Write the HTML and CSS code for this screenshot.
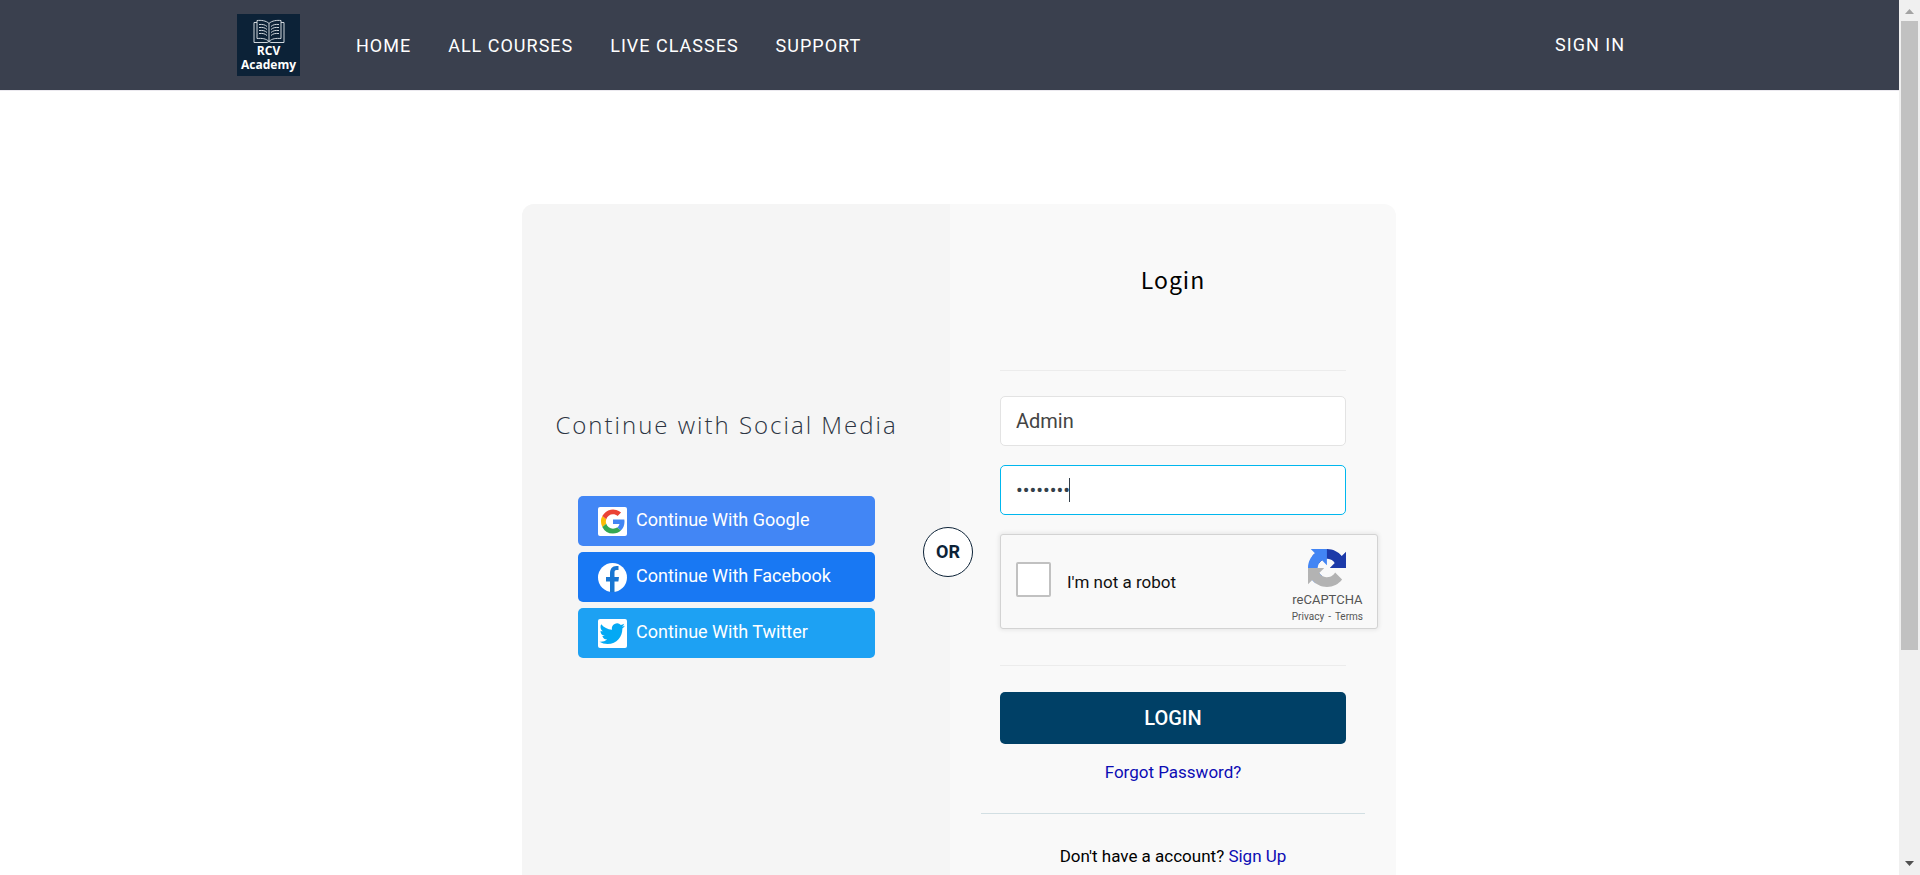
FILE: index.html
```html
<!DOCTYPE html>
<html lang="en">
<head>
<meta charset="utf-8">
<title>Login - RCV Academy</title>
<link rel="stylesheet" href="styles.css">
</head>
<body>
<div class="page">
  <header class="site-header">
    <div class="header-inner">
      <a class="logo" href="#" aria-label="RCV Academy home">
        <svg class="logo-book" viewBox="0 0 32 24" fill="none" stroke="#cfd6dc" stroke-width="1" aria-hidden="true">
          <path d="M16 4C13 1 8 .6 4 1v18c5-.4 9 0 12 3 3-3 7-3.400 12-3V1c-4-.4-9 0-12 3v18"/>
          <path d="M4 3H1v20h13l2-1 2 1h13V3h-3"/>
          <path d="M6 5c4-.3 6 .2 8 2M6 8c4-.3 6 .2 8 2M6 11c4-.3 6 .2 8 2M6 14c4-.3 6 .2 8 2M18 7c2-1.800 4-2.300 8-2M18 10c2-1.800 4-2.300 8-2M18 13c2-1.800 4-2.300 8-2M18 16c2-1.800 4-2.300 8-2"/>
        </svg>
        <span class="logo-text">RCV<br>Academy</span>
      </a>
      <nav class="main-nav" aria-label="Main">
        <a href="#">HOME</a>
        <a href="#">ALL COURSES</a>
        <a href="#">LIVE CLASSES</a>
        <a href="#">SUPPORT</a>
      </nav>
      <a class="sign-in" href="#">SIGN IN</a>
    </div>
  </header>

  <main class="main">
    <div class="card">
      <section class="social">
        <h2 class="social-title">Continue with Social Media</h2>
        <div class="social-list">
          <button class="social-btn google" type="button">
            <svg class="social-icon" viewBox="0 0 29 29" aria-hidden="true">
              <rect width="29" height="29" rx="2" fill="#fff"/>
              <g transform="translate(3 2.500) scale(.5)">
                <path fill="#4285f4" d="M47 24.500c0-1.600-.2-3.200-.4-4.500H24v9h13c-.6 3-2.300 5.500-4.800 7.200l7.500 5.900C44.300 37.900 47 31.800 47 24.500z"/>
                <path fill="#fbbc05" d="M10.500 28.600a14.500 14.500 0 0 1 0-9.200l-7.900-6.200a24 24 0 0 0 0 21.600z"/>
                <path fill="#ea4335" d="M24 9.500c3.500 0 6.700 1.200 9.200 3.600l6.900-6.900A24 24 0 0 0 2.600 13.200l7.900 6.200C12.400 13.700 17.700 9.500 24 9.500z"/>
                <path fill="#34a853" d="M24 48c6.500 0 11.900-2.100 15.900-5.800l-7.700-6c-2.200 1.500-4.900 2.300-8.200 2.300-6.300 0-11.600-4.200-13.500-9.900l-7.900 6.200A24 24 0 0 0 24 48z"/>
              </g>
            </svg>
            <span>Continue With Google</span>
          </button>
          <button class="social-btn facebook" type="button">
            <svg class="social-icon" viewBox="0 0 29 29" aria-hidden="true">
              <circle cx="14.500" cy="14.500" r="14.500" fill="#fff"/>
              <path fill="#1976d2" d="M12 29V18.500H8V14h4v-3.200C12 6 14 3 18.500 3H20.500v4h-2C16.800 7 16.500 8 16.500 9.700V14H21l-.6 4.500h-3.900V29z"/>
            </svg>
            <span>Continue With Facebook</span>
          </button>
          <button class="social-btn twitter" type="button">
            <svg class="social-icon" viewBox="0 0 29 29" aria-hidden="true">
              <rect width="29" height="29" rx="2" fill="#fff"/>
              <path transform="translate(1.500 2) scale(1.060)" fill="#03a9f4" d="M23.950 4.570a10 10 0 0 1-2.820.77 4.960 4.960 0 0 0 2.160-2.720c-.95.550-2 .96-3.130 1.180a4.920 4.920 0 0 0-8.380 4.480C7.690 8.090 4.070 6.130 1.640 3.160a4.820 4.820 0 0 0-.67 2.480c0 1.710.87 3.210 2.190 4.100a4.900 4.900 0 0 1-2.230-.62v.06a4.920 4.920 0 0 0 3.950 4.830 5 5 0 0 1-2.210.08 4.940 4.940 0 0 0 4.600 3.420A9.870 9.870 0 0 1 0 19.540a13.990 13.990 0 0 0 7.550 2.210c9.050 0 14-7.500 14-13.980 0-.21 0-.42-.02-.63a9.940 9.940 0 0 0 2.460-2.550z"/>
            </svg>
            <span>Continue With Twitter</span>
          </button>
        </div>
        <span class="or-badge">OR</span>
      </section>

      <section class="login">
        <form class="login-form">
          <h1 class="login-title">Login</h1>
          <div class="fields">
            <input class="field" type="text" aria-label="Username" value="Admin">
            <div class="password">
              <input class="field field-active" type="password" aria-label="Password" value="password">
              <span class="caret"></span>
            </div>
            <div class="captcha">
              <input class="captcha-box" type="checkbox" id="robot">
              <label class="captcha-label" for="robot">I'm not a robot</label>
              <div class="captcha-brand">
                <svg class="captcha-logo" viewBox="0 0 64 64" aria-hidden="true">
                  <path fill="#1c3aa9" d="M64 31.955l-.033-1.370V4.687l-7.160 7.160C50.948 4.674 42.033.093 32.050.093c-10.400 0-19.622 4.960-25.458 12.640l11.736 11.860a15.550 15.550 0 0 1 4.754-5.334c2.050-1.600 4.952-2.906 8.968-2.906.485 0 .860.057 1.135.163 4.976.393 9.288 3.140 11.828 7.124l-8.307 8.307L64 31.953"/>
                  <path fill="#4285f4" d="M31.862.094l-1.370.033H4.594l7.160 7.160C4.580 13.147 0 22.060 0 32.046c0 10.400 4.960 19.622 12.640 25.458L24.500 45.768a15.550 15.550 0 0 1-5.334-4.754c-1.600-2.050-2.906-4.952-2.906-8.968 0-.485.057-.860.163-1.135.393-4.976 3.140-9.288 7.124-11.828l8.307 8.307L31.860.095"/>
                  <path fill="#b3b3b3" d="M.001 32.045l.033 1.370v25.898l7.160-7.160c5.860 7.173 14.774 11.754 24.760 11.754 10.400 0 19.622-4.960 25.458-12.640l-11.736-11.860a15.550 15.550 0 0 1-4.754 5.334c-2.050 1.600-4.952 2.906-8.968 2.906-.485 0-.860-.057-1.135-.163-4.976-.393-9.288-3.140-11.828-7.124l8.307-8.307L0 32.045"/>
                </svg>
                <span class="captcha-name">reCAPTCHA</span>
                <span class="captcha-links"><a href="#">Privacy</a><span>-</span><a href="#">Terms</a></span>
              </div>
            </div>
          </div>
          <button class="login-btn" type="submit">LOGIN</button>
          <a class="link forgot" href="#">Forgot Password?</a>
        </form>
        <p class="signup">Don't have a account? <a class="link" href="#">Sign Up</a></p>
      </section>
    </div>
  </main>
</div>
<div class="scrollbar" aria-hidden="true">
  <svg class="arrow" viewBox="0 0 21 21"><path fill="#a3a3a3" d="M6 14h9L10.500 9z"/></svg>
  <div class="track"><div class="thumb"></div></div>
  <svg class="arrow" viewBox="0 0 21 21"><path fill="#505050" d="M6 7h9l-4.500 5z"/></svg>
</div>
</body>
</html>
```
FILE: styles.css
```css
* { box-sizing: border-box; }

body {
  margin: 0;
  height: 100vh;
  display: flex;
  overflow: hidden;
  background: #fff;
  color: #111;
  font-family: Roboto, "Liberation Sans", sans-serif;
  font-size: 17px;
}

a { color: inherit; text-decoration: none; }
button, input { font-family: inherit; }

.page { flex: 1; min-width: 0; overflow: hidden; }

.site-header {
  background: #3a404e;
  border-bottom: 1px solid #ebe9ef;
}
.header-inner {
  max-width: 1425px;
  margin: 0 auto;
  padding: 14px 37px 14px 0;
  display: flex;
  align-items: center;
}
.logo {
  width: 63px;
  height: 62px;
  padding-top: 5px;
  background: #0c2237;
  color: #fff;
  display: flex;
  flex-direction: column;
  align-items: center;
}
.logo-text {
  font: bold 12px/14px "Open Sans", sans-serif;
  text-align: center;
}
.logo-book { width: 32px; height: 25px; }
.main-nav {
  flex: 1;
  display: flex;
  gap: 37px;
  margin-left: 56px;
  padding-top: 2px;
}
.main-nav a, .sign-in {
  color: #fff;
  font-size: 18px;
  line-height: 24px;
  letter-spacing: 1px;
}

.main { padding: 113px 0 0 19px; }
.card {
  max-width: 874px;
  margin: 0 auto;
  display: grid;
  grid-template-columns: 428fr 446fr;
  border-radius: 12px;
  background: #f9f9f9;
}

.social {
  position: relative;
  padding: 200px 19px 0 0;
  background: #f5f5f5;
  border-radius: 12px 0 0 12px;
  display: flex;
  flex-direction: column;
  align-items: center;
}
.social-title {
  margin: 0 0 50px;
  color: #2c3442;
  font: 300 24px/42px "Open Sans", sans-serif;
  letter-spacing: 2px;
}
.social-list { width: 297px; display: grid; gap: 6px; }
.social-btn {
  height: 50px;
  padding: 0 20px;
  border: 0;
  border-radius: 5px;
  color: #fff;
  font-size: 18px;
  line-height: 24px;
  display: flex;
  align-items: center;
  gap: 9px;
}
.social-btn span { padding-bottom: 3px; }
.social-icon { width: 29px; height: 29px; }
.google { background: #4286f5; }
.facebook { background: #1878f3; }
.twitter { background: #1da1f3; }
.or-badge {
  position: absolute;
  right: -23px;
  top: 323px;
  width: 50px;
  height: 50px;
  border: 1px solid #0c2237;
  border-radius: 50%;
  background: #fff;
  color: #0c2237;
  font-size: 18px;
  font-weight: 700;
  line-height: 48px;
  text-align: center;
}

.login { padding: 56px 31px 48px; }
.login-form {
  padding: 0 19px 24px;
  display: flex;
  flex-direction: column;
}
.login-title {
  margin: 0;
  color: #000;
  font: 400 23px/38px "Noto Sans CJK SC", sans-serif;
  letter-spacing: 1px;
  text-align: center;
}
.fields {
  margin: 72px 0 26px;
  padding: 25px 0 36px;
  border: solid #ececec;
  border-width: 1px 0;
  display: grid;
  gap: 19px;
}
.field {
  display: block;
  width: 100%;
  height: 50px;
  padding: 0 15px;
  border: 1px solid #e3e3e3;
  border-radius: 5px;
  outline: 0;
  background: #fff;
  color: #444;
  font-size: 20px;
}
.field-active { border-color: #00b7ee; color: #333f4a; }
.password { position: relative; }
.caret {
  position: absolute;
  left: 69px;
  top: 13px;
  width: 1px;
  height: 24px;
  background: #333f4a;
}
.captcha {
  margin-right: -32px;
  height: 95px;
  padding: 0 14px 0 15px;
  border: 1px solid #d3d3d3;
  border-radius: 3px;
  background: #f9f9f9;
  box-shadow: 0 0 4px 1px rgba(0, 0, 0, .08);
  display: flex;
  align-items: center;
}
.captcha-box {
  appearance: none;
  width: 35px;
  height: 35px;
  margin: 0 16px 4px 0;
  border: 2px solid #c1c1c1;
  border-radius: 2px;
  background: #fff;
}
.captcha-label { flex: 1; font-size: 17px; }
.captcha-brand {
  align-self: flex-start;
  padding-top: 14px;
  display: flex;
  flex-direction: column;
  align-items: center;
  color: #555;
}
.captcha-logo { width: 38px; height: 38px; }
.captcha-name { margin-top: 5px; font-size: 13px; line-height: 16px; }
.captcha-links { display: flex; gap: 4px; font-size: 10px; line-height: 18px; }

.login-btn {
  height: 52px;
  border: 0;
  border-radius: 5px;
  background: #004066;
  color: #fff;
  font-size: 20px;
  font-weight: 500;
}
.link { color: #0c0cb4; }
.forgot { margin-top: 16px; line-height: 24px; align-self: center; }
.signup {
  margin: 5px 0 0;
  padding-top: 30px;
  border-top: 1px solid #d2dfe3;
  line-height: 24px;
  text-align: center;
  color: #000;
}

.scrollbar {
  width: 21px;
  background: #f0f0f0;
  display: flex;
  flex-direction: column;
}
.arrow { width: 21px; height: 21px; }
.track { flex: 1; padding: 0 2px; }
.thumb { height: 75.5%; background: #c1c1c1; }
```
